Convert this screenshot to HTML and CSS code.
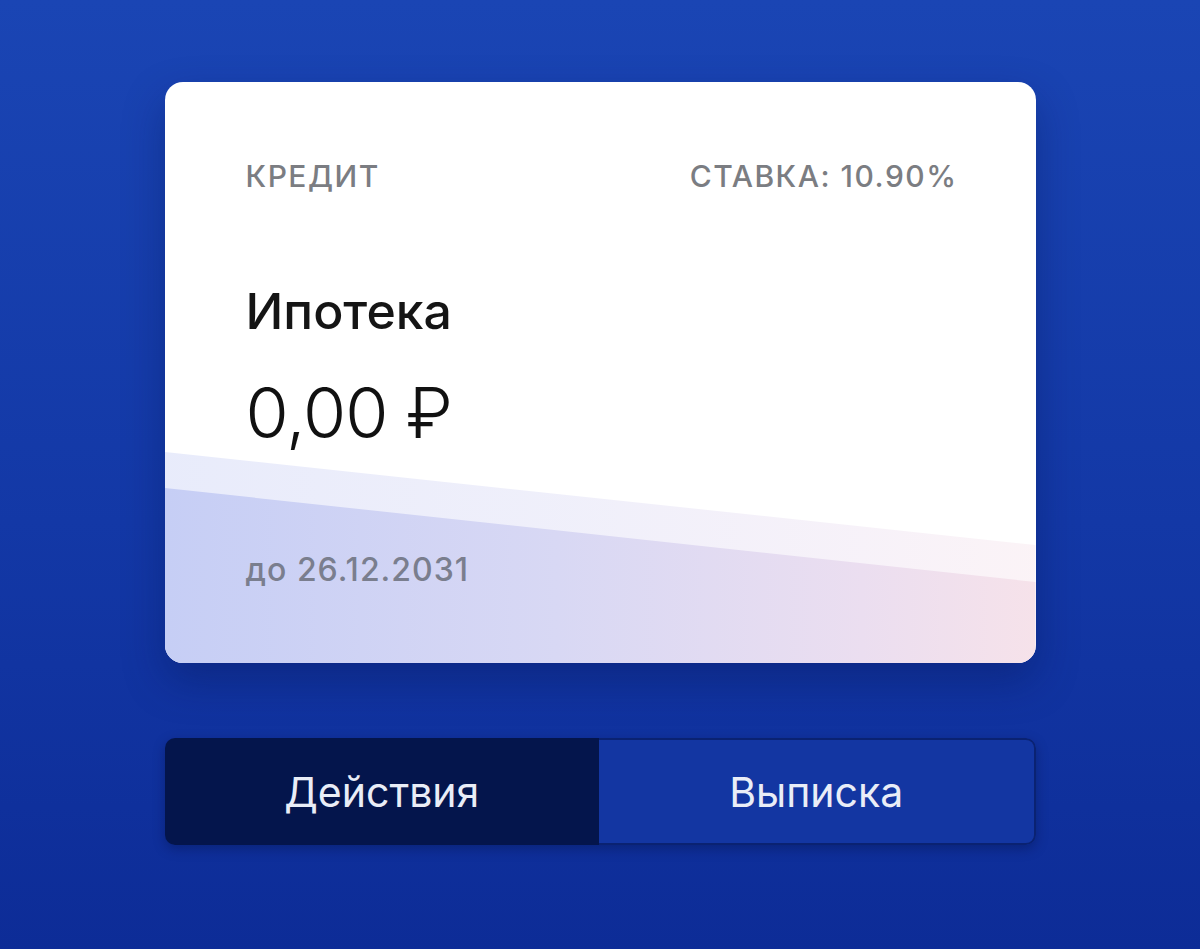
FILE: index.html
```html
<!DOCTYPE html>
<html lang="ru">
<head>
<meta charset="utf-8">
<title>Ипотека</title>
<link rel="stylesheet" href="styles.css">
</head>
<body>
<main class="screen">
  <section class="card">
    <div class="card-head">
      <span class="label">КРЕДИТ</span>
      <span class="label">СТАВКА: 10.90%</span>
    </div>
    <h1 class="title">Ипотека</h1>
    <div class="amount">0,00 ₽</div>
    <div class="due">до 26.12.2031</div>
  </section>
  <div class="actions">
    <button class="btn btn-active">Действия</button>
    <button class="btn btn-plain">Выписка</button>
  </div>
</main>
</body>
</html>
```
FILE: styles.css
```css
html, body {
  margin: 0;
  padding: 0;
  height: 100%;
}
body {
  background: linear-gradient(180deg, #1a45b4 0%, #1338a6 55%, #0d2c97 100%);
  font-family: Inter, "Noto Sans", "Liberation Sans", sans-serif;
}
.screen {
  width: 871px;
  margin: 0 auto;
  padding-top: 82px;
  display: flex;
  flex-direction: column;
  gap: 75px;
}
.card {
  position: relative;
  height: 581px;
  box-sizing: border-box;
  padding: 76px 78px 74px 81px;
  border-radius: 18px;
  background: #ffffff;
  overflow: hidden;
  box-shadow: 0 18px 40px rgba(5, 20, 80, 0.35);
  display: flex;
  flex-direction: column;
}
.card::before,
.card::after {
  content: "";
  position: absolute;
  inset: 0;
  background: linear-gradient(90deg, #c6cef5 0%, #d8d8f4 45%, #ebdef0 80%, #f6e2ea 100%);
  pointer-events: none;
}
.card::before {
  opacity: 0.4;
  clip-path: polygon(0 370px, 100% 463px, 100% 100%, 0 100%);
}
.card::after {
  clip-path: polygon(0 406px, 100% 500px, 100% 100%, 0 100%);
}
.card > * {
  position: relative;
  z-index: 1;
}
.card-head {
  display: flex;
  justify-content: space-between;
}
.label {
  font-size: 30px;
  line-height: 36px;
  font-weight: 500;
  color: #7b7d82;
  letter-spacing: 1.5px;
}
.title {
  margin: 87px 0 0;
  font-size: 50px;
  line-height: 60px;
  font-weight: 500;
  color: #151515;
}
.amount {
  margin-top: 32px;
  font-size: 70px;
  line-height: 80px;
  font-weight: 300;
  color: #111111;
  letter-spacing: -1px;
}
.due {
  margin-top: 99px;
  font-size: 32px;
  line-height: 36px;
  font-weight: 500;
  color: #7a7e8e;
  letter-spacing: 1px;
}
.actions {
  display: flex;
  height: 107px;
  border-radius: 10px;
  overflow: hidden;
  box-shadow: 0 4px 12px rgba(3, 15, 60, 0.35);
}
.btn {
  flex: 1;
  margin: 0;
  border: none;
  font-family: inherit;
  font-size: 41px;
  font-weight: 400;
  color: #e9edf7;
  cursor: pointer;
}
.btn-active {
  background: #04154c;
}
.btn-plain {
  background: #1336a2;
  border: 2px solid #0a2272;
  border-left: none;
  border-radius: 0 10px 10px 0;
}
```
